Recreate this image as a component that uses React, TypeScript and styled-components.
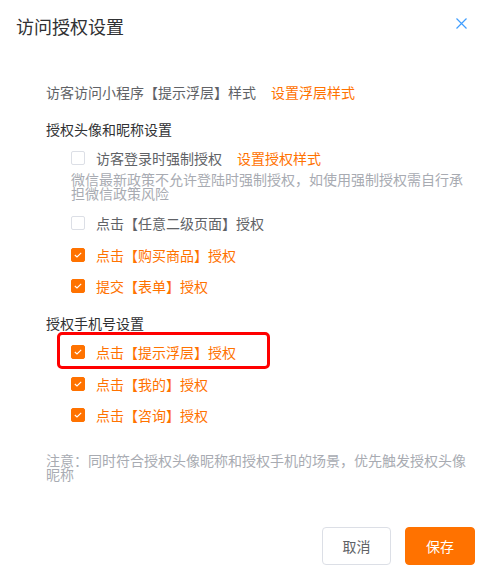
import React from "react";
import styled, { createGlobalStyle } from "styled-components";

const ORANGE = "#ff7200";

const GlobalStyle = createGlobalStyle`
  html, body { margin: 0; padding: 0; background: #fff; }
  body { font-family: "Noto Sans CJK SC", "Noto Sans", sans-serif; }
  * { box-sizing: border-box; }
`;

const Dialog = styled.div`
  display: flex;
  flex-direction: column;
  height: 577px;
  width: 488px;
  background: #fff;
`;

const Header = styled.div`
  display: flex;
  align-items: flex-start;
  justify-content: space-between;
  padding: 14px 16px 0 16px;
`;

const Title = styled.div`
  font-size: 18px;
  line-height: 24px;
  color: #303133;
`;

const CloseButton = styled.button`
  display: flex;
  align-items: center;
  justify-content: center;
  width: 12px;
  height: 12px;
  padding: 0;
  margin-top: 3px;
  margin-right: 5px;
  border: none;
  background: transparent;
  cursor: pointer;
`;

const Body = styled.div`
  padding: 44px 16px 0 46px;
  font-size: 14px;
`;

const IntroLine = styled.div`
  line-height: 20px;
  color: #606266;
  white-space: nowrap;
`;

const Link = styled.span`
  color: ${ORANGE};
  margin-left: 15px;
  cursor: pointer;
`;

const Section = styled.div`
  margin-top: 17px;
`;

const SectionTitle = styled.div`
  line-height: 20px;
  color: #303133;
`;

const OptionList = styled.div`
  padding-left: 25px;
  margin-top: 9px;
  display: flex;
  flex-direction: column;
`;

const OptionItem = styled.div<{ $gap: number }>`
  position: relative;
  margin-top: ${(p) => p.$gap}px;
`;

const OptionRow = styled.label<{ $checked: boolean }>`
  display: flex;
  align-items: center;
  height: 20px;
  line-height: 20px;
  gap: 11px;
  color: ${(p) => (p.$checked ? ORANGE : "#606266")};
  white-space: nowrap;
  cursor: pointer;
`;

const Box = styled.span<{ $checked: boolean }>`
  display: inline-flex;
  align-items: center;
  justify-content: center;
  width: 14px;
  height: 14px;
  flex: none;
  border-radius: 2px;
  border: 1px solid ${(p) => (p.$checked ? ORANGE : "#dcdfe6")};
  background: ${(p) => (p.$checked ? ORANGE : "#fff")};
`;

const Hint = styled.div`
  margin-top: 4px;
  font-size: 14px;
  line-height: 14px;
  color: #a8abb2;
`;

const Highlight = styled.div`
  position: absolute;
  top: -10px;
  left: -14px;
  width: 213px;
  height: 37px;
  border: 3px solid #f00;
  border-radius: 5px;
  pointer-events: none;
`;

const Note = styled.div`
  margin-top: 28px;
  font-size: 14px;
  line-height: 14px;
  color: #a8abb2;
`;

const Footer = styled.div`
  margin-top: auto;
  display: flex;
  justify-content: flex-end;
  gap: 14px;
  padding: 0 13px 12px 0;
`;

const Button = styled.button<{ $primary?: boolean }>`
  height: 38px;
  width: ${(p) => (p.$primary ? 70 : 69)}px;
  border-radius: 4px;
  font-family: "Noto Sans CJK SC", "Noto Sans", sans-serif;
  font-size: 14px;
  cursor: pointer;
  border: 1px solid ${(p) => (p.$primary ? ORANGE : "#dcdfe6")};
  background: ${(p) => (p.$primary ? ORANGE : "#fff")};
  color: ${(p) => (p.$primary ? "#fff" : "#606266")};
`;

const Check = () => (
  <svg width="8" height="6" viewBox="0 0 8 6" fill="none">
    <polyline points="0.8,3 3,5 7.2,0.8" stroke="#fff" strokeWidth="1.1" />
  </svg>
);

type Opt = { label: string; checked: boolean; gap: number; link?: string; hint?: string; highlight?: boolean };

const Option: React.FC<{ o: Opt }> = ({ o }) => (
  <OptionItem $gap={o.gap}>
    <OptionRow $checked={o.checked}>
      <Box $checked={o.checked}>{o.checked && <Check />}</Box>
      <span>
        {o.label}
        {o.link && <Link>{o.link}</Link>}
      </span>
    </OptionRow>
    {o.hint && <Hint>{o.hint}</Hint>}
    {o.highlight && <Highlight />}
  </OptionItem>
);

const avatarOpts: Opt[] = [
  {
    label: "访客登录时强制授权",
    checked: false,
    gap: 0,
    link: "设置授权样式",
    hint: "微信最新政策不允许登陆时强制授权，如使用强制授权需自行承担微信政策风险",
  },
  { label: "点击【任意二级页面】授权", checked: false, gap: 13 },
  { label: "点击【购买商品】授权", checked: true, gap: 11.5 },
  { label: "提交【表单】授权", checked: true, gap: 11.5 },
];

const phoneOpts: Opt[] = [
  { label: "点击【提示浮层】授权", checked: true, gap: 0, highlight: true },
  { label: "点击【我的】授权", checked: true, gap: 11.5 },
  { label: "点击【咨询】授权", checked: true, gap: 11.5 },
];

export default function App() {
  return (
    <>
      <GlobalStyle />
      <Dialog>
        <Header>
          <Title>访问授权设置</Title>
          <CloseButton aria-label="关闭">
            <svg width="11" height="11" viewBox="0 0 11 11">
              <path d="M0.5 0.5 L10.5 10.5 M10.5 0.5 L0.5 10.5" stroke="#409eff" strokeWidth="1.2" />
            </svg>
          </CloseButton>
        </Header>
        <Body>
          <IntroLine>
            访客访问小程序【提示浮层】样式<Link>设置浮层样式</Link>
          </IntroLine>
          <Section>
            <SectionTitle>授权头像和昵称设置</SectionTitle>
            <OptionList>
              {avatarOpts.map((o) => (
                <Option key={o.label} o={o} />
              ))}
            </OptionList>
          </Section>
          <Section>
            <SectionTitle>授权手机号设置</SectionTitle>
            <OptionList>
              {phoneOpts.map((o) => (
                <Option key={o.label} o={o} />
              ))}
            </OptionList>
          </Section>
          <Note>注意：同时符合授权头像昵称和授权手机的场景，优先触发授权头像昵称</Note>
        </Body>
        <Footer>
          <Button>取消</Button>
          <Button $primary>保存</Button>
        </Footer>
      </Dialog>
    </>
  );
}
